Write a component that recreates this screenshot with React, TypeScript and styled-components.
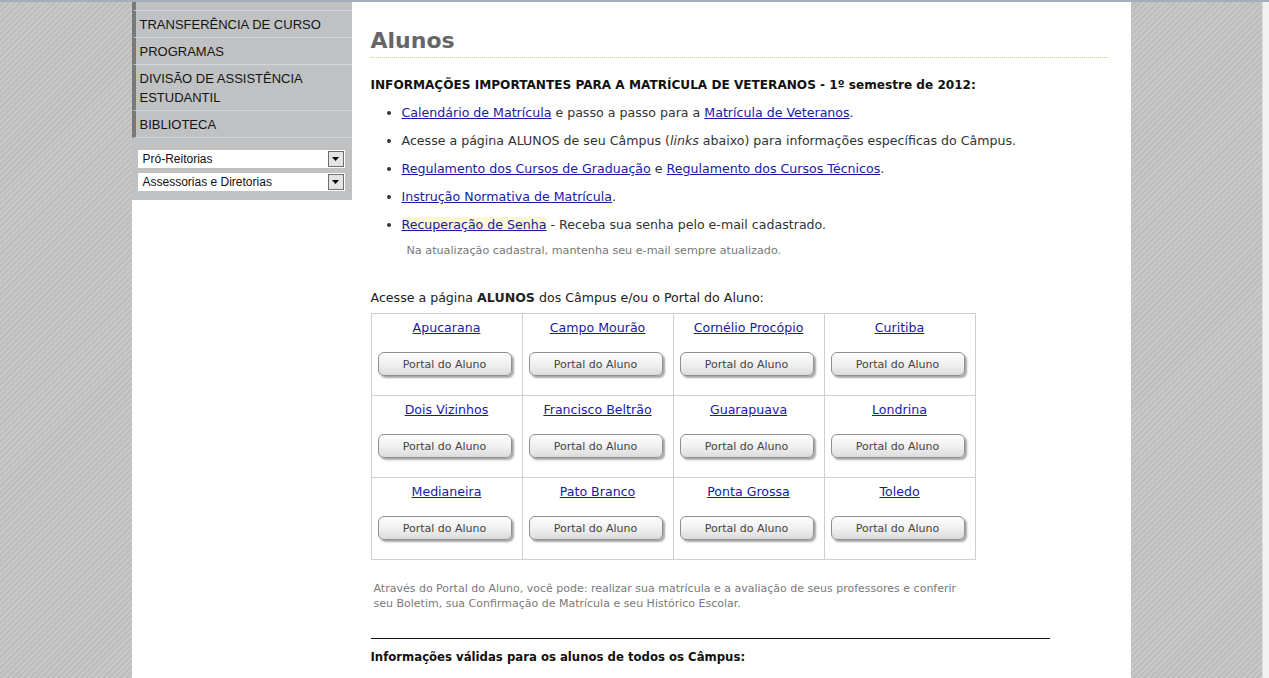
import React from "react";
import styled, { createGlobalStyle } from "styled-components";

const Global = createGlobalStyle`
  html, body { margin: 0; padding: 0; }
  body {
    width: 1269px;
    height: 678px;
    overflow: hidden;
    font-family: "DejaVu Sans", Verdana, sans-serif;
    font-size: 12.6px;
    color: #222;
  }
`;

const Screen = styled.div`
  display: flex;
  flex-direction: column;
  width: 1269px;
  height: 678px;
  overflow: hidden;
`;

const TopEdge = styled.div`
  height: 2px;
  background: #a6adba;
  flex: none;
`;

const Body = styled.div`
  display: flex;
  flex: 1;
  min-height: 0;
`;

const Stage = styled.div`
  flex: 1;
  display: flex;
  justify-content: center;
  background-color: #c4c4c4;
  background-image: repeating-linear-gradient(
    135deg,
    #c8c8c8 0px,
    #c8c8c8 2px,
    #bdbdbd 2px,
    #bdbdbd 4px
  );
`;

const ScrollStrip = styled.div`
  width: 6px;
  background: #f2f2f2;
  border-left: 1px solid #dcdcdc;
`;

const Wrapper = styled.div`
  width: 999px;
  background: #fff;
  display: flex;
  align-items: flex-start;
`;

const Sidebar = styled.div`
  width: 220px;
  flex: none;
  background: #bfc1c3;
`;

const Menu = styled.ul`
  list-style: none;
  margin: 0;
  padding: 0;
`;

const MenuItem = styled.li<{ $stub?: boolean }>`
  border-left: 4px solid #77797b;
  border-bottom: 1px solid #d3d5d7;
  padding: ${(p) => (p.$stub ? "0" : "4px 6px 3px 4px")};
  height: ${(p) => (p.$stub ? "8px" : "auto")};
  font-family: "Liberation Sans", Arial, sans-serif;
  font-size: 13px;
  line-height: 19px;
  color: #141414;
  text-transform: uppercase;
`;

const Selects = styled.div`
  display: flex;
  flex-direction: column;
  gap: 5px;
  padding: 12px 7px 9px 6px;
`;

const FakeSelect = styled.div`
  display: flex;
  align-items: center;
  height: 18px;
  background: #fff;
  font-family: "Liberation Sans", Arial, sans-serif;
  font-size: 12px;
  color: #111;
  padding-left: 5px;
  padding-right: 1px;
`;

const SelectLabel = styled.span`
  flex: 1;
`;

const Arrow = styled.span`
  width: 14px;
  height: 14px;
  border: 1px solid #6d6d6d;
  background: #e4e4e4;
  display: flex;
  align-items: center;
  justify-content: center;
`;

const Main = styled.div`
  flex: 1;
  padding: 0 22px 0 19px;
`;

const Title = styled.h1`
  margin: 0;
  padding-top: 26px;
  padding-bottom: 3px;
  font-family: "DejaVu Sans", Verdana, sans-serif;
  font-size: 22px;
  line-height: 26px;
  font-weight: bold;
  color: #666;
  border-bottom: 1px dotted #cfc689;
`;

const Lead = styled.p`
  margin: 19px 0 0 0;
  font-weight: bold;
  font-size: 12.1px;
  line-height: 17px;
  color: #111;
`;

const List = styled.ul`
  margin: 10px 0 0 0;
  padding-left: 31px;
  line-height: 17px;
  color: #333;
  li {
    margin-bottom: 11px;
  }
`;

const A = styled.a<{ $hl?: boolean }>`
  color: #1a1aa6;
  text-decoration: underline;
  background: ${(p) => (p.$hl ? "#fbf8d3" : "transparent")};
`;

const Note = styled.p`
  margin: 0 0 0 36px;
  font-size: 11.2px;
  color: #777;
  line-height: 14px;
`;

const Intro = styled.p`
  margin: 31px 0 7px 0;
  line-height: 17px;
  color: #222;
`;

const Grid = styled.table`
  border-collapse: collapse;
  width: 605px;
  table-layout: fixed;
  td {
    border: 1px solid #cfcfcf;
    text-align: center;
    vertical-align: top;
    height: 75px;
    padding: 6px 0 0 0;
  }
`;

const CampusLink = styled(A)`
  display: inline-block;
  line-height: 15px;
`;

const PortalButton = styled.button`
  display: block;
  margin: 17px auto 0 6px;
  width: 134px;
  height: 24px;
  border: 1px solid #8f8f8f;
  border-radius: 6px;
  background: linear-gradient(#fdfdfd 0%, #f1f1f1 50%, #dcdcdc 100%);
  box-shadow: 2px 2px 2px rgba(0, 0, 0, 0.35);
  font-family: "DejaVu Sans", Verdana, sans-serif;
  font-size: 11px;
  color: #444;
  padding: 0;
`;

const FootNote = styled.p`
  margin: 21px 0 0 3px;
  font-size: 11px;
  line-height: 15px;
  color: #7a7a7a;
  width: 592px;
`;

const Rule = styled.hr`
  margin: 27px 0 0 0;
  width: 679px;
  border: 0;
  border-top: 1px solid #111;
`;

const Sub = styled.p`
  margin: 10px 0 0 0;
  font-family: "DejaVu Sans Condensed", Tahoma, sans-serif;
  font-weight: bold;
  font-size: 13px;
  color: #111;
`;

const menu = [
  "Transferência de Curso",
  "Programas",
  "Divisão de Assistência Estudantil",
  "Biblioteca",
];

const campi = [
  ["Apucarana", "Campo Mourão", "Cornélio Procópio", "Curitiba"],
  ["Dois Vizinhos", "Francisco Beltrão", "Guarapuava", "Londrina"],
  ["Medianeira", "Pato Branco", "Ponta Grossa", "Toledo"],
];

const ArrowIcon = () => (
  <svg width="8" height="5" viewBox="0 0 8 5">
    <path d="M0 0 H7 L3.5 4 Z" fill="#000" />
  </svg>
);

export default function App() {
  return (
    <>
      <Global />
      <Screen>
        <TopEdge />
        <Body>
          <Stage>
            <Wrapper>
              <Sidebar>
                <Menu>
                  <MenuItem $stub />
                  {menu.map((m) => (
                    <MenuItem key={m}>{m}</MenuItem>
                  ))}
                </Menu>
                <Selects>
                  <FakeSelect>
                    <SelectLabel>Pró-Reitorias</SelectLabel>
                    <Arrow>
                      <ArrowIcon />
                    </Arrow>
                  </FakeSelect>
                  <FakeSelect>
                    <SelectLabel>Assessorias e Diretorias</SelectLabel>
                    <Arrow>
                      <ArrowIcon />
                    </Arrow>
                  </FakeSelect>
                </Selects>
              </Sidebar>
              <Main>
                <Title>Alunos</Title>
                <Lead>
                  INFORMAÇÕES IMPORTANTES PARA A MATRÍCULA DE VETERANOS - 1º semestre de 2012:
                </Lead>
                <List>
                  <li>
                    <A href="#">Calendário de Matrícula</A> e passo a passo para a{" "}
                    <A href="#">Matrícula de Veteranos</A>.
                  </li>
                  <li>
                    Acesse a página ALUNOS de seu Câmpus (<i>links</i> abaixo) para informações
                    específicas do Câmpus.
                  </li>
                  <li>
                    <A href="#">Regulamento dos Cursos de Graduação</A> e{" "}
                    <A href="#">Regulamento dos Cursos Técnicos</A>.
                  </li>
                  <li>
                    <A href="#">Instrução Normativa de Matrícula</A>.
                  </li>
                  <li>
                    <A href="#" $hl>
                      Recuperação de Senha
                    </A>{" "}
                    - Receba sua senha pelo e-mail cadastrado.
                  </li>
                </List>
                <Note>Na atualização cadastral, mantenha seu e-mail sempre atualizado.</Note>
                <Intro>
                  Acesse a página <b>ALUNOS</b> dos Câmpus e/ou o Portal do Aluno:
                </Intro>
                <Grid>
                  <tbody>
                    {campi.map((row, i) => (
                      <tr key={i}>
                        {row.map((c) => (
                          <td key={c}>
                            <CampusLink href="#">{c}</CampusLink>
                            <PortalButton type="button">Portal do Aluno</PortalButton>
                          </td>
                        ))}
                      </tr>
                    ))}
                  </tbody>
                </Grid>
                <FootNote>
                  Através do Portal do Aluno, você pode: realizar sua matrícula e a avaliação de seus
                  professores e conferir seu Boletim, sua Confirmação de Matrícula e seu Histórico
                  Escolar.
                </FootNote>
                <Rule />
                <Sub>Informações válidas para os alunos de todos os Câmpus:</Sub>
              </Main>
            </Wrapper>
          </Stage>
          <ScrollStrip />
        </Body>
      </Screen>
    </>
  );
}
